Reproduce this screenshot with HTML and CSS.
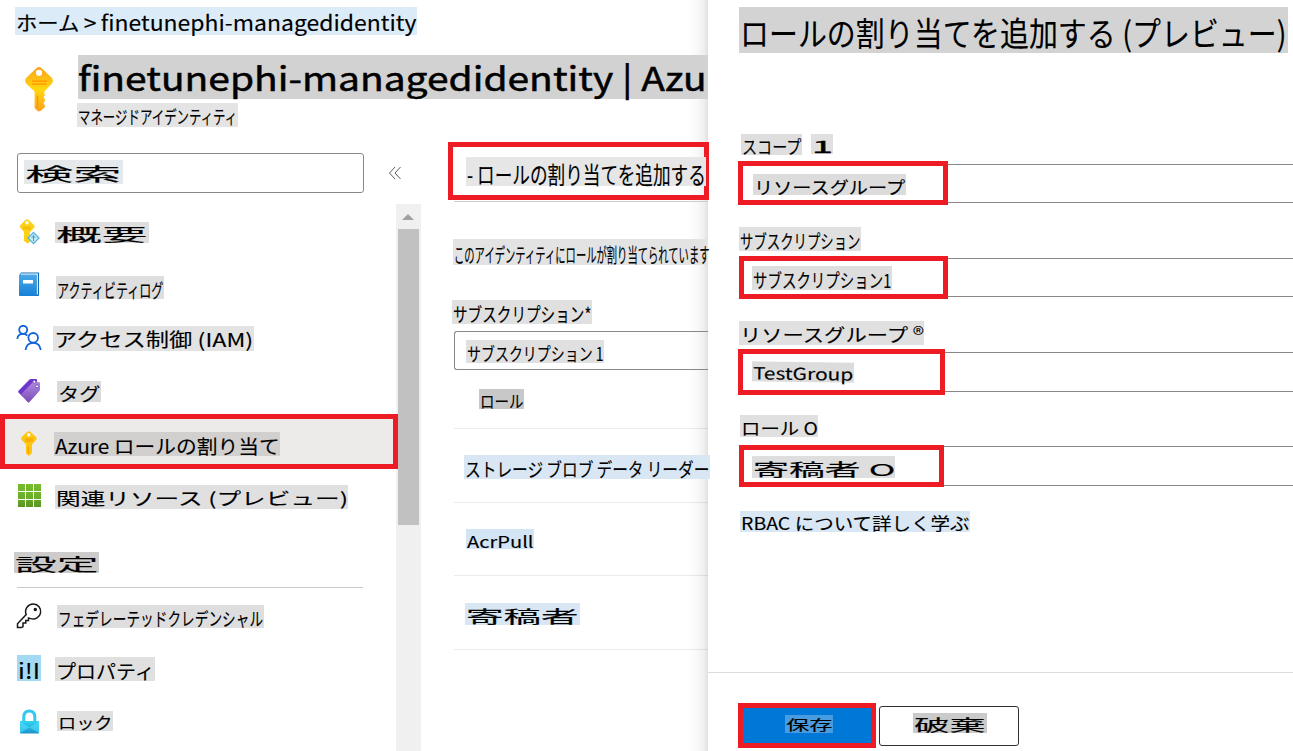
FILE: index.html
```html
<!DOCTYPE html>
<html lang="ja">
<head>
<meta charset="utf-8">
<title>finetunephi-managedidentity</title>
<link rel="stylesheet" href="styles.css">
</head>
<body>
<div class="app">
  <section class="blade">
    <div class="label crumb"><span><em>ホーム</em> &gt; finetunephi-managedidentity</span></div>
    <header class="head">
      <svg class="head-icon" viewBox="0 0 30 48">
        <defs>
          <linearGradient id="gold" x1="0" y1="0" x2="0" y2="1"><stop offset="0" stop-color="#fea11b"/><stop offset=".5" stop-color="#ffd70f"/><stop offset="1" stop-color="#fea11b"/></linearGradient>
        </defs>
        <path fill="url(#gold)" d="M12.500 2Q15 0 17.500 2L28 12Q30.500 15 28 18L20.500 26V28L21 30L19.500 32L21 34V36L19.500 38L21 40V42L16.500 46Q15 47 13.500 46L10.500 43V26L2 18Q-.5 15 2 12Z"/>
        <circle cx="15" cy="7" r="3.200" fill="#fff"/>
        <path stroke="#ff9300" stroke-width="1.400" d="M8 15.500h15M8 18.500h15M13.500 30v13" fill="none"/>
      </svg>
      <div class="head-text">
        <div class="label title"><span>finetunephi-managedidentity | Azu</span></div>
        <div class="label subtitle"><span>マネージドアイデンティティ</span></div>
      </div>
    </header>
    <div class="body">
      <div class="side">
        <div class="search-row">
          <div class="search"><div class="label search-text"><span>検索</span></div></div>
          <svg class="collapse" viewBox="0 0 14 14"><path d="M7 1L1.500 7L7 13M12.500 1L7 7L12.500 13" fill="none" stroke="#605e5c" stroke-width="1"/></svg>
        </div>
        <div class="nav-area">
          <nav class="nav">
            <div class="item r1">
              <svg class="icon" viewBox="0 0 26 26"><path fill="#fcd116" d="M9.500.8Q11 -.3 12.500.8L18 6Q19.200 7.500 18 9L14 13V23L11.500 24.500L8 22V13L4.500 9Q3.300 7.500 4.500 6Z"/><circle cx="11" cy="3.800" r="1.700" fill="#fff"/><path d="M7 8h8M7 9.800h8" stroke="#f0b400"/><path d="M17.500 13.500L23 19L17.500 24.500L12 19Z" fill="#c9ecfa" stroke="#59b4d9" stroke-width="1.300"/><path d="M17.500 16v6M15.500 19l2-2l2 2" stroke="#2f9fd0" fill="none"/></svg>
              <div class="label l-over"><span>概要</span></div>
            </div>
            <div class="item r2">
              <svg class="icon" viewBox="0 0 26 26"><defs><linearGradient id="book" x1="0" y1="0" x2="0" y2="1"><stop offset="0" stop-color="#4ba9e9"/><stop offset="1" stop-color="#1580d6"/></linearGradient></defs><path fill="#0f6cbd" d="M5 .5H23V23Q23 24 22 24H4V2Z"/><path fill="#fff" d="M5 1.500H22V3H4.500Z"/><path fill="#cfe8fa" d="M20.500 2.500H22V22.500H20.500Z"/><path fill="url(#book)" d="M3 2.500H20.500V24H4Q3 24 3 23Z"/><path fill="#fff" d="M7 8h10v3.500H7z"/></svg>
              <div class="label l-log"><span>アクティビティログ</span></div>
            </div>
            <div class="item r3">
              <svg class="icon" viewBox="0 0 26 26" fill="none" stroke="#0f62d8" stroke-width="1.800"><circle cx="7.200" cy="4.800" r="4"/><path d="M1.300 13.800Q1.800 8.800 7 8.800Q9.500 8.800 11.300 10.500"/><circle cx="17.200" cy="12.800" r="4.800"/><path d="M9.500 25Q10.500 17.800 17.200 17.800Q23.800 17.800 24.800 25"/></svg>
              <div class="label l-iam"><span>アクセス制御 (IAM)</span></div>
            </div>
            <div class="item r4">
              <svg class="icon" viewBox="0 0 26 26"><defs><linearGradient id="tag" x1="0" y1="0" x2="0" y2="1"><stop offset="0" stop-color="#b28ae0"/><stop offset="1" stop-color="#7a4cb8"/></linearGradient></defs><path fill="#6d35d0" d="M13.500 1.500Q14 1 15 1H20Q21 1 21 2V6L7 19L2.500 14.500Q1.800 13.500 2.500 12.700Z"/><path fill="url(#tag)" d="M17.500 3.500Q18 3 19 3.200L23 4Q24 4.200 24 5.200V11.500Q24 12.300 23.400 13L13.500 24Q12.500 25 11.500 24L5.500 17.500Q4.800 16.500 5.500 15.700Z"/><circle cx="18.300" cy="3.700" r="1.500" fill="#fff" stroke="#552f99" stroke-width=".7"/><circle cx="21" cy="8.300" r="1.500" fill="#fff" stroke="#552f99" stroke-width=".7"/></svg>
              <div class="label l-tag"><span>タグ</span></div>
            </div>
            <div class="item r5">
              <svg class="icon" viewBox="0 0 26 26"><path fill="#ffc60f" d="M11.300.8Q12.800-.3 14.300.8L20 6Q21.300 7.500 20 9L16 13.500V22L13.800 24.300Q12.800 25 11.800 24.300L10 22.500V13.500L5.700 9Q4.500 7.500 5.700 6Z"/><circle cx="12.800" cy="3.800" r="1.700" fill="#fff"/><path d="M9 8h8M9 10h8M12.200 15.500v7" stroke="#f79a00" stroke-width="1.100"/></svg>
              <div class="label l-role"><span>Azure ロールの割り当て</span></div>
            </div>
            <div class="item r6">
              <svg class="icon" viewBox="0 0 26 26"><defs><linearGradient id="grid" gradientUnits="userSpaceOnUse" x1="0" y1="0" x2="0" y2="23"><stop offset="0" stop-color="#76bc2d"/><stop offset=".6" stop-color="#6aae29"/><stop offset="1" stop-color="#5a9322"/></linearGradient></defs><path fill="url(#grid)" d="M2 0h7v7H2zM10 0h7v7h-7zM18 0h7v7h-7zM2 8h7v7H2zM10 8h7v7h-7zM18 8h7v7h-7zM2 16h7v7H2zM10 16h7v7h-7zM18 16h7v7h-7z"/></svg>
              <div class="label l-rel"><span>関連リソース (プレビュー)</span></div>
            </div>
            <div class="group"><div class="label l-set"><span>設定</span></div></div>
            <div class="item r7">
              <svg class="icon" viewBox="0 0 26 26" fill="none" stroke="#1b1a19" stroke-width="1.500"><path d="M17.500 1A7.500 7.500 0 1 1 14.800 15.600L12.500 15V17.500H9.800V20H7V23.500L5.500 24.500H1.500V20.800L10.200 11.500A7.600 7.600 0 0 1 17.500 1Z"/><circle cx="19.300" cy="6.500" r="1" fill="#1b1a19"/></svg>
              <div class="label l-fed"><span>フェデレーテッドクレデンシャル</span></div>
            </div>
            <div class="item r8">
              <div class="label l-bars"><span>i!I</span></div>
              <div class="label l-prop"><span>プロパティ</span></div>
            </div>
            <div class="item r9">
              <svg class="icon" viewBox="0 0 26 26"><defs><linearGradient id="lock" x1="0" y1="0" x2="0" y2="1"><stop offset="0" stop-color="#32d4f5"/><stop offset="1" stop-color="#1b93c9"/></linearGradient></defs><path d="M7.800 13V8Q7.800 2 13.300 2T18.800 8V13" fill="none" stroke="#32c8f2" stroke-width="3"/><rect x="4" y="12" width="19" height="12.500" rx=".8" fill="url(#lock)"/><path d="M4 12.500L13.500 18.500L4 24ZM23 12.500L13.500 18.500L23 24Z" fill="#50e0ff" opacity=".6"/></svg>
              <div class="label l-lock"><span>ロック</span></div>
            </div>
          </nav>
          <div class="scrollbar"><i class="arrow"></i><i class="thumb"></i></div>
        </div>
      </div>
      <main class="main">
        <div class="add"><div class="label add-text"><span>- ロールの割り当てを追加する</span></div></div>
        <div class="intro"><div class="label intro-text"><span>このアイデンティティにロールが割り当てられています</span></div></div>
        <div class="label sub-label"><span>サブスクリプション*</span></div>
        <div class="select"><div class="label select-text"><span>サブスクリプション 1</span></div></div>
        <div class="row th"><div class="label th-text"><span>ロール</span></div></div>
        <div class="row td1"><div class="label td1-text"><span>ストレージ ブロブ データ リーダー</span></div></div>
        <div class="row td2"><div class="label td2-text"><span>AcrPull</span></div></div>
        <div class="row td3"><div class="label td3-text"><span>寄稿者</span></div></div>
      </main>
    </div>
  </section>
  <aside class="panel">
    <div class="label p-title"><span>ロールの割り当てを追加する (プレビュー)</span></div>
    <div class="form">
      <div class="names n1"><div class="label p-scope"><span>スコープ</span></div><div class="label p-one"><span>1</span></div></div>
      <div class="field"><div class="mark m1"><div class="label v1"><span>リソースグループ</span></div></div></div>
      <div class="names n2"><div class="label p-sub"><span>サブスクリプション</span></div></div>
      <div class="field"><div class="mark m2"><div class="label v2"><span>サブスクリプション1</span></div></div></div>
      <div class="names n3"><div class="label p-rg"><span>リソースグループ <small>®</small></span></div></div>
      <div class="field tall"><div class="mark m3"><div class="label v3"><span>TestGroup</span></div></div></div>
      <div class="names n4"><div class="label p-role"><span>ロール O</span></div></div>
      <div class="field tall"><div class="mark m4"><div class="label v4"><span>寄稿者 O</span></div></div></div>
      <div class="label p-rbac"><span>RBAC について詳しく学ぶ</span></div>
    </div>
    <footer class="foot">
      <div class="save"><div class="label save-text"><span>保存</span></div></div>
      <div class="discard"><div class="label discard-text"><span>破棄</span></div></div>
    </footer>
  </aside>
</div>
<script src="fit.js"></script>
</body>
</html>
```
FILE: fit.js
```js
// Stretch or condense each label's text so that it fills its box.
document.querySelectorAll('.label').forEach(function (label) {
  var text = label.firstElementChild;
  var style = getComputedStyle(label);
  var room = label.clientWidth - parseFloat(style.paddingLeft) - parseFloat(style.paddingRight);
  text.style.transform = 'scaleX(' + room / text.offsetWidth + ')';
});
```
FILE: styles.css
```css
* { box-sizing: border-box; }
html { overflow: hidden; }
body { margin: 0; overflow: hidden; background: #fff; color: #000; font-family: "Noto Sans CJK JP", sans-serif; }
svg, i { display: block; flex: none; }
.app { display: grid; grid-template-columns: 708px 585px; height: 751px; overflow: hidden; }

.label { flex: none; padding: 0 1px 0 .5px; background: #e0e0e0; white-space: nowrap; -webkit-text-stroke: .12px #000; }
.label span { display: inline-block; vertical-align: top; transform-origin: 0 50%; }

/* Left blade, shaded where the panel meets it */
.blade { display: flex; flex-direction: column; height: 751px; padding-top: 7px; background: linear-gradient(to left, #e0e0e0 0, #efefef 4px, #f8f8f8 10px, #fff 20px) right / 20px 100% no-repeat; }
.crumb { width: 402px; height: 28px; margin-left: 15px; background: #dcebf8; font-size: 21.5px; line-height: 29.6px; word-spacing: -.8px; }
.crumb em { font-size: 20px; font-style: normal; }
.head { display: flex; height: 107px; padding-left: 24px; }
.head-icon { width: 30px; height: 47px; margin-top: 31px; }
.head-text { margin: 20px 0 0 23px; }
.title { width: 630px; height: 44px; margin-left: 1px; padding: .5px 1px 0 0; background: #d2d2d2; font-size: 33px; line-height: 42px; -webkit-text-stroke-width: .5px; }
.subtitle { width: 161px; height: 24px; margin-top: 4px; background: #e4e4e4; font-size: 18px; line-height: 27.3px; }
.body { display: grid; grid-template-columns: 421px 287px; height: 609px; }

.side { display: flex; flex-direction: column; gap: 11px; padding-top: 11px; }
.search-row { display: flex; align-items: center; gap: 24px; height: 40px; padding-left: 17px; }
.search { width: 347px; height: 40px; padding: 6px; border: 1px solid #8a8886; border-radius: 3px; }
.search-text { width: 99px; height: 24px; padding-right: 2px; background: #e6e9ec; font-size: 18.5px; line-height: 26.9px; }
.collapse { width: 14px; height: 14px; }
.nav-area { display: flex; height: 547px; }
.nav { width: 396px; }
.item { display: flex; align-items: flex-start; height: 52px; padding-left: 16px; }
.icon { width: 26px; height: 26px; }
.r1 { padding-top: 15px; }
.l-over { width: 94px; height: 21px; margin: 3px 0 0 13px; padding-right: 2px; background: #dedede; font-size: 16.5px; line-height: 25px; }
.r2 { height: 53px; padding-top: 16px; }
.l-log { width: 108px; height: 23px; margin: 4px 0 0 14px; background: #dedede; font-size: 19px; line-height: 27.6px; }
.r3 { padding-top: 16px; }
.l-iam { width: 201px; height: 25px; margin: 1px 0 0 11px; background: #e3e3e3; font-size: 19px; line-height: 25px; }
.r4 { height: 53px; padding-top: 17px; }
.l-tag { width: 44px; height: 21px; margin: 3px 0 0 15px; background: #dadada; font-size: 18px; line-height: 24.3px; }
.r5 { position: relative; width: 398px; height: 55px; padding: 12px 0 0 11px; border: 5px solid #ed1c24; background: #edebe9; }
.l-role { width: 226px; height: 24px; margin: 1px 0 0 12px; background: #d1d0cf; font-size: 19.5px; line-height: 27px; }
.r6 { padding-top: 15px; }
.l-rel { width: 293px; height: 24px; margin: 1px 0 0 13px; font-size: 17.5px; line-height: 25.8px; }
.group { width: 346px; height: 67px; margin-left: 17px; padding-top: 31px; border-bottom: 1px solid #c8c8c8; }
.l-set { width: 85px; height: 21px; margin-left: -3px; background: #cdcccb; font-size: 17.5px; line-height: 24.8px; }
.r7 { height: 55px; padding-top: 15px; }
.l-fed { width: 207px; height: 23px; margin: 2px 0 0 15px; background: #dedede; font-size: 18.5px; line-height: 27px; }
.r8 { height: 54px; padding: 12px 0 0 17px; }
.l-bars { width: 24px; height: 26px; background: #a3d9f3; font-size: 21px; line-height: 31.6px; }
.l-prop { width: 100px; height: 24px; margin: 2px 0 0 14px; font-size: 19.5px; line-height: 28px; }
.r9 { height: 54px; padding-top: 12px; }
.l-lock { width: 56px; height: 20px; margin: 2px 0 0 15px; font-size: 16px; line-height: 22px; }
.scrollbar { width: 25px; padding: 10px 2px 0; background: #f0f0f0; }
.arrow { width: 12px; height: 6px; margin-left: 4px; background: #a0a0a0; clip-path: polygon(50% 0, 100% 100%, 0 100%); }
.thumb { width: 21px; height: 296px; margin-top: 9px; background: #c1c1c1; }

.main { padding-left: 33px; }
.add { position: relative; width: 261px; height: 58px; margin-left: -6px; padding: 10px 0 0 13px; border: 5px solid #ed1c24; }
.add-text { width: 240px; height: 29px; background: #e6e6e6; font-size: 23.5px; line-height: 34.2px; }
.intro { height: 63px; margin-top: 1px; padding-top: 37px; border-top: 1px solid #cdcdcd; }
.intro-text { width: 256px; height: 26px; margin-left: -1px; padding-right: 0; background: #e3e3e3; font-size: 20px; line-height: 31.2px; }
.sub-label { width: 140px; height: 24px; margin: 36px 0 0 -2px; font-size: 19.5px; line-height: 27px; }
.select { height: 39px; margin-top: 7px; padding: 8px 0 0 11px; border: 1px solid #8a8886; border-right: 0; border-radius: 3px 0 0 3px; }
.select-text { width: 138px; height: 23px; font-size: 18px; line-height: 26.3px; }
.row { border-bottom: 1px solid rgba(0, 0, 0, .08); }
.th { height: 59px; padding: 19px 0 0 25px; }
.th-text { width: 45px; height: 20px; background: #c8c8c8; font-size: 17px; line-height: 24px; }
.td1 { height: 74px; padding: 26px 0 0 10px; }
.td1-text { position: relative; width: 246px; height: 24px; background: #d9e6f4; font-size: 19px; line-height: 27.4px; word-spacing: -.5px; }
.td2 { height: 73px; padding: 26px 0 0 12px; }
.td2-text { width: 68px; height: 20px; background: #d3e4f4; font-size: 16px; line-height: 24.6px; }
.td3 { height: 74px; padding: 27px 0 0 11px; }
.td3-text { width: 115px; height: 22px; padding-right: 2px; background: #d9e6f4; font-size: 17px; line-height: 25.2px; }

/* Add role assignment panel */
.panel { display: flex; flex-direction: column; height: 751px; padding-top: 7px; background: #fff; }
.p-title { width: 549px; height: 46px; margin-left: 31px; padding: 1px 2px 0 .5px; background: #d3d3d3; font-size: 33px; line-height: 49px; }
.form { height: 619px; padding: 81px 0 0 30px; }
.names { display: flex; }
.n1 { height: 30px; padding-left: 3px; gap: 9px; }
.p-scope { width: 61px; height: 21px; background: #dedede; font-size: 18px; line-height: 24.6px; }
.p-one { width: 22px; height: 20px; font-size: 16.5px; line-height: 24.6px; -webkit-text-stroke-width: .4px; }
.field { height: 39px; margin-left: 2px; border: solid #8a8886; border-width: 1px 0; }
.tall { height: 40px; }
.mark { position: relative; border: 5px solid #ed1c24; background: #fff; }
.m1 { width: 210px; height: 44px; margin-left: -2px; top: -4px; padding: 8px 0 0 10px; }
.v1 { width: 153px; height: 21px; padding-left: 1px; background: #dcdcdc; font-size: 17.5px; line-height: 25.6px; }
.n2 { height: 55px; padding: 24px 0 0 1px; }
.p-sub { width: 122px; height: 24px; font-size: 19px; line-height: 27.4px; }
.m2 { width: 209px; height: 43px; margin-left: -1px; top: -3px; padding: 5px 0 0 8px; }
.v2 { width: 140px; height: 24px; background: #dedede; font-size: 19px; line-height: 27.4px; }
.n3 { height: 55px; padding: 24px 0 0 1px; }
.p-rg { width: 185px; height: 24px; padding-right: 0; font-size: 18px; line-height: 27.3px; }
.p-rg small { font-size: 20px; line-height: 1; vertical-align: 0; -webkit-text-stroke-width: 0; }
.m3 { width: 207px; height: 46px; margin-left: -2px; top: -4px; padding: 8px 0 0 9px; }
.v3 { width: 102px; height: 20px; padding-left: 1px; background: #dcdcdc; font-size: 16.5px; line-height: 22.4px; transform: rotate(.8deg); }
.n4 { height: 54px; padding: 23px 0 0 2px; }
.p-role { width: 78px; height: 22px; font-size: 17px; line-height: 26px; }
.m4 { width: 205px; height: 42px; margin-left: -1px; top: -2px; padding: 6px 0 0 8px; }
.v4 { width: 143px; height: 22px; background: #dedede; font-size: 16.5px; line-height: 26.4px; }
.p-rbac { width: 230px; height: 21px; margin: 25px 0 0 2px; background: #d9e6f4; font-size: 17.5px; line-height: 23.7px; }
.foot { display: flex; align-items: flex-start; gap: 3px; height: 79px; padding: 30px 0 0 30px; border-top: 1px solid #dcdcdc; }
.save { width: 138px; height: 45px; padding: 7px 0 0 42px; border: 5px solid #ed1c24; background: #0078d7; }
.save-text { width: 48px; height: 18px; background: #4a9ce0; font-size: 14px; line-height: 19.8px; }
.discard { width: 140px; height: 40px; margin-top: 3px; padding: 6px 0 0 33px; border: 1px solid #323130; border-radius: 3px; }
.discard-text { width: 74px; height: 20px; padding-right: 2px; background: #cacaca; font-size: 15.5px; line-height: 23px; }
```
